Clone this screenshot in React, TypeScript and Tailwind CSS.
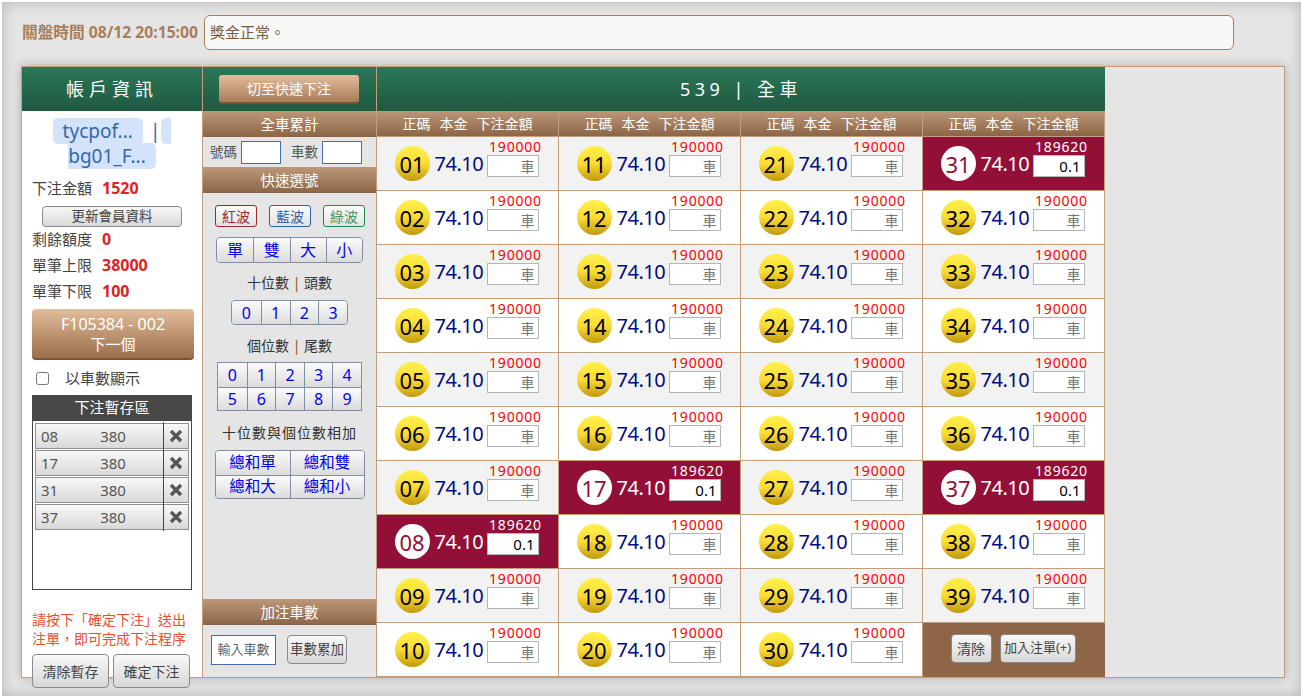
// App.tsx
const FONT = "font-['Noto_Sans','Noto_Sans_CJK_TC',sans-serif]";
const BROWN_BAR = 'bg-gradient-to-b from-[#bd9878] to-[#8b6546] text-white text-center';
const GRAY_BTN = 'bg-gradient-to-b from-[#f8f8f8] to-[#d8d8d8] border border-[#8a8a8a] rounded-[4px] text-[#444]';
const BLUE_CELL = 'bg-gradient-to-b from-[#fbfbfb] to-[#dcdcdc] text-[#0000ee] flex items-center justify-center';

const picked = ['08', '17', '31', '37'];
const balls = Array.from({ length: 39 }, (_, i) => String(i + 1).padStart(2, '0'));

const BallCell = ({ no, row }: { no: string; row: number }) => {
  const on = picked.includes(no);
  return (
    <div
      className={`h-[54px] border-b border-r border-[#c49e7c] flex items-center justify-center pl-[1px] pr-[1px] ${
        on ? 'bg-[#920f38]' : row % 2 === 0 ? 'bg-[#f2f2f2]' : 'bg-white'
      }`}
    >
      <div
        className={`w-[35px] h-[35px] rounded-full flex items-center justify-center text-[22px] leading-none shrink-0 ${
          on ? 'bg-white text-[#920f38]' : 'bg-gradient-to-b from-[#fff04a] via-[#fbdc35] to-[#c09a08] text-black'
        }`}
      >
        {no}
      </div>
      <div className={`ml-[5px] w-[48px] text-[20px] leading-none tracking-[-0.5px] whitespace-nowrap ${on ? 'text-white' : 'text-[#000a80]'}`}>74.10</div>
      <div className="ml-[4px] w-[54px] flex flex-col items-start pb-[12px]">
        <div className={`w-[58px] text-center text-[14px] leading-[17px] tracking-[0.8px] ${on ? 'text-white' : 'text-[#ff0000]'}`}>
          {on ? '189620' : '190000'}
        </div>
        <input
          readOnly
          defaultValue={on ? '0.1' : ''}
          placeholder="車"
          className={`w-[52px] h-[22px] bg-white border border-[#b5b5b5] text-right pr-[3px] text-black placeholder:text-[#777] outline-none ${on ? 'text-[15px]' : 'text-[14px]'}`}
        />
      </div>
    </div>
  );
};

const StagedRow = ({ no }: { no: string }) => (
  <div className="h-[26px] mb-[1px] flex items-center border border-[#8f8f8f] text-[15px] text-[#555] bg-gradient-to-b from-[#f8f8f8] to-[#d9d9d9]">
    <span className="w-[60px] pl-[5px]">{no}</span>
    <span className="w-[34px] text-center">380</span>
    <span className="ml-auto w-[25px] h-[28px] border-l border-[#444] flex items-center justify-center">
      <svg width="14" height="14" viewBox="0 0 14 14">
        <path d="M2 2 L12 12 M12 2 L2 12" stroke="#555" strokeWidth="3.2" />
      </svg>
    </span>
  </div>
);

const InfoRow = ({ label, value }: { label: string; value: string }) => (
  <div className="flex items-center h-[26px] text-[15px] text-[#444]">
    <span className="w-[70px]">{label}</span>
    <span className="font-bold text-[16px] text-[#dd2222]">{value}</span>
  </div>
);

const WaveBtn = ({ text, cls }: { text: string; cls: string }) => (
  <div className={`w-[42px] h-[22px] rounded-[3px] border bg-gradient-to-b from-[#fbfbfb] to-[#e2e2e2] text-[14px] flex items-center justify-center ${cls}`}>{text}</div>
);

const Heading = ({ children, cls }: { children: React.ReactNode; cls: string }) => (
  <div className={`text-center text-[14px] leading-[20px] text-[#333] ${cls}`}>{children}</div>
);

export default function App() {
  return (
    <div className={`${FONT} relative w-[1301px] h-[696px] overflow-hidden bg-[#e5e5e5] border-t-2 border-l-2 border-white shadow-[inset_0_0_14px_rgba(0,0,0,0.22)] pt-[13px] pl-[19px]`}>
      {/* top bar */}
      <div className="flex items-center h-[35px]">
        <div className="w-[183px] pl-[1px] text-[15.7px] font-bold text-[#a97e5a] whitespace-nowrap">關盤時間 08/12 20:15:00</div>
        <div className="w-[1030px] h-[35px] rounded-[6px] border border-[#a97e5a] bg-[#f8f8f8] flex items-center pl-[5px] text-[15px] text-[#7b5b3e]">獎金正常。</div>
      </div>

      {/* main panel */}
      <div className="mt-[16px] w-[1264px] h-[612px] border border-[#c49e7c] bg-[#e5e5e5] flex shadow-[0_0_10px_rgba(0,0,0,0.25)]">
        {/* account column */}
        <div className="w-[181px] h-[610px] border-r border-[#c49e7c] bg-white">
          <div className="h-[44px] bg-gradient-to-b from-[#2a7857] to-[#1f5a42] text-white text-[18px] tracking-[5px] flex items-center justify-center">帳戶資訊</div>
          <div className="px-[10px]">
            <div className="mt-[8px] text-center text-[19px] leading-[25px] text-[#3567ab]">
              <span className="bg-[#d2e3fb] rounded-[5px] px-[10px]">tycpof...</span>
              <span className="ml-[7px] mr-[1px]">|</span>
              <span className="bg-[#d2e3fb] rounded-[5px] px-[10px]">{' '}bg01_F...</span>
            </div>
            <div className="mt-[6px]"><InfoRow label="下注金額" value="1520" /></div>
            <div className={`${GRAY_BTN} mx-[10px] mt-[5px] w-[140px] h-[21px] text-[13.5px] flex items-center justify-center`}>更新會員資料</div>
            <div className="-mt-[1px]">
              <InfoRow label="剩餘額度" value="0" />
              <InfoRow label="單筆上限" value="38000" />
              <InfoRow label="單筆下限" value="100" />
            </div>
            <div className="mt-[5px] w-[162px] h-[51px] rounded-[4px] border-b-[2px] border-[#7d5231] bg-gradient-to-b from-[#e3bd9c] to-[#9a6f4c] text-white leading-[20px] flex flex-col items-center justify-center">
              <span className="text-[16px]">F105384 - 002</span>
              <span className="text-[15px]">下一個</span>
            </div>
            <div className="mt-[8px] h-[20px] flex items-center text-[15px] text-[#444]">
              <input type="checkbox" className="ml-[4px] w-[13px] h-[13px]" />
              <span className="ml-[16px]">以車數顯示</span>
            </div>
            <div className="mt-[7px] w-[160px] h-[25px] bg-[#474747] text-white text-[15px] flex items-center justify-center">下注暫存區</div>
            <div className="w-[160px] h-[170px] border border-[#444] bg-white pt-[2px] px-[2px]">
              {picked.map(no => <StagedRow key={no} no={no} />)}
            </div>
            <div className="mt-[20px] text-[14px] leading-[19px] text-[#e8502f]">
              <p>請按下「確定下注」送出</p>
              <p>注單，即可完成下注程序</p>
            </div>
            <div className="mt-[6px] flex gap-[4px]">
              <div className={`${GRAY_BTN} w-[77px] h-[34px] text-[14px] flex items-center justify-center`}>清除暫存</div>
              <div className={`${GRAY_BTN} w-[77px] h-[34px] text-[14px] flex items-center justify-center`}>確定下注</div>
            </div>
          </div>
        </div>

        {/* quick pick column */}
        <div className="w-[174px] h-[610px] border-r border-[#c49e7c] flex flex-col">
          <div className="h-[44px] pr-[1px] bg-gradient-to-b from-[#2a7857] to-[#1f5a42] flex items-center justify-center">
            <div className="w-[140px] h-[29px] rounded-[3px] border-b-[2px] border-[#7d5231] bg-gradient-to-b from-[#e3bd9c] to-[#a87d59] text-white text-[14px] flex items-center justify-center">切至快速下注</div>
          </div>
          <div className={`${BROWN_BAR} text-[14.5px] h-[26px] leading-[26px]`}>全車累計</div>
          <div className="h-[30px] flex items-center pl-[7px] text-[13.5px] text-[#555]">
            <span>號碼</span>
            <input readOnly className="ml-[4px] w-[40px] h-[23px] bg-white border border-[#3f6fb0]" />
            <span className="ml-[10px]">車數</span>
            <input readOnly className="ml-[4px] w-[40px] h-[23px] bg-white border border-[#3f6fb0]" />
          </div>
          <div className={`${BROWN_BAR} text-[14.5px] h-[26px] leading-[26px]`}>快速選號</div>
          <div className="mt-[12px] flex pl-[12px] gap-[12px]">
            <WaveBtn text="紅波" cls="border-[#9c2b2b] text-[#9c2b2b]" />
            <WaveBtn text="藍波" cls="border-[#2f62a6] text-[#2f62a6]" />
            <WaveBtn text="綠波" cls="border-[#1f8a4c] text-[#3c9a64]" />
          </div>

          <div className="mt-[10px] mx-auto w-[147px] h-[26px] grid grid-cols-4 border border-[#7f8fa6] rounded-[4px] overflow-hidden text-[16px]">
            {['單', '雙', '大', '小'].map((t, i) => (
              <div key={t} className={`${BLUE_CELL} ${i > 0 ? 'border-l border-[#7f8fa6]' : ''}`}>{t}</div>
            ))}
          </div>

          <Heading cls="mt-[10px]">十位數 <span className="text-[#8a5a20]">|</span> 頭數</Heading>
          <div className="mt-[7px] mx-auto w-[117px] h-[25px] grid grid-cols-4 border border-[#7f8fa6] rounded-[4px] overflow-hidden text-[16px]">
            {['0', '1', '2', '3'].map((t, i) => (
              <div key={t} className={`${BLUE_CELL} ${i > 0 ? 'border-l border-[#7f8fa6]' : ''}`}>{t}</div>
            ))}
          </div>

          <Heading cls="mt-[11px]">個位數 <span className="text-[#8a5a20]">|</span> 尾數</Heading>
          <div className="mt-[6px] mx-auto w-[145px] h-[49px] grid grid-cols-5 grid-rows-2 border border-[#7f8fa6] text-[16px]">
            {['0', '1', '2', '3', '4', '5', '6', '7', '8', '9'].map((t, i) => (
              <div key={t} className={`${BLUE_CELL} ${i % 5 > 0 ? 'border-l border-[#7f8fa6]' : ''} ${i > 4 ? 'border-t border-[#7f8fa6]' : ''}`}>{t}</div>
            ))}
          </div>

          <Heading cls="mt-[12px] tracking-[1px]">十位數與個位數相加</Heading>
          <div className="mt-[7px] mx-auto w-[150px] h-[49px] grid grid-cols-2 grid-rows-2 border border-[#7f8fa6] rounded-[4px] overflow-hidden text-[15.5px]">
            {['總和單', '總和雙', '總和大', '總和小'].map((t, i) => (
              <div key={t} className={`${BLUE_CELL} ${i % 2 > 0 ? 'border-l border-[#7f8fa6]' : ''} ${i > 1 ? 'border-t border-[#7f8fa6]' : ''}`}>{t}</div>
            ))}
          </div>

          <div className={`${BROWN_BAR} text-[14.5px] mt-auto h-[26px] leading-[26px]`}>加注車數</div>
          <div className="h-[52px] shrink-0 flex items-start pt-[10px] pl-[8px] gap-[11px]">
            <div className="w-[65px] h-[30px] bg-white border border-[#3f6fb0] text-[13px] text-[#666] flex items-center justify-center">輸入車數</div>
            <div className={`${GRAY_BTN} w-[60px] h-[29px] text-[13.5px] flex items-center justify-center whitespace-nowrap`}>車數累加</div>
          </div>
        </div>

        {/* balls column */}
        <div className="w-[728px] h-[610px] flex flex-col">
          <div className="h-[44px] bg-gradient-to-b from-[#2a7857] to-[#1f5a42] text-white text-[18px] tracking-[4.5px] flex items-center justify-center">539 | 全車</div>
          <div className="grid grid-cols-4 h-[26px]">
            {[0, 1, 2, 3].map(c => (
              <div key={c} className={`${BROWN_BAR} text-[14px] border-r border-b border-[#c49e7c] flex items-center justify-center gap-[9px]`}>
                <span>正碼</span><span>本金</span><span>下注金額</span>
              </div>
            ))}
          </div>
          <div className="grid grid-cols-4 grid-rows-10 grid-flow-col">
            {balls.map((no, i) => <BallCell key={no} no={no} row={i % 10} />)}
            <div className="h-[54px] bg-[#8c6647] flex items-center justify-center gap-[8px] pb-[4px] pr-[2px]">
              <div className={`${GRAY_BTN} w-[41px] h-[29px] text-[14px] flex items-center justify-center`}>清除</div>
              <div className={`${GRAY_BTN} w-[76px] h-[29px] text-[13px] flex items-center justify-center whitespace-nowrap`}>加入注單(+)</div>
            </div>
          </div>
        </div>
      </div>
    </div>
  );
}
